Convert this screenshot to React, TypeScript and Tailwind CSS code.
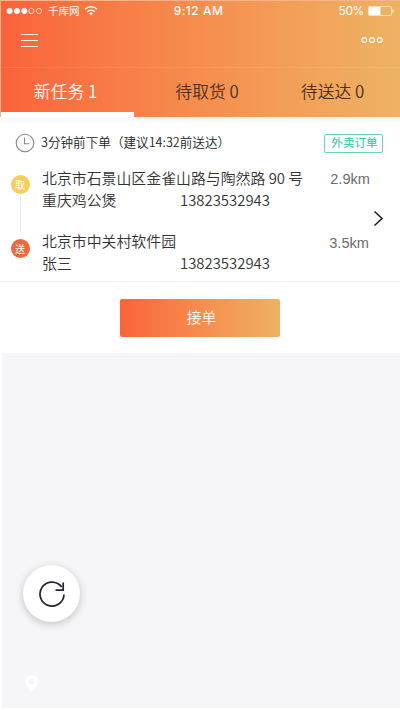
import React from 'react'

const tabs = [
  { label: '新任务 1', active: true, shift: 'pr-[4px] pt-[1px]' },
  { label: '待取货 0', active: false, shift: 'pl-[13px]' },
  { label: '待送达 0', active: false, shift: 'pr-[2px]' },
]

const stops = [
  { mark: '取', color: 'bg-[#f9cd5c]', address: '北京市石景山区金雀山路与陶然路 90 号', name: '重庆鸡公煲', phone: '13823532943', distance: '2.9km', shift: 'pt-[1px]' },
  { mark: '送', color: 'bg-[#ee6a3c]', address: '北京市中关村软件园', name: '张三', phone: '13823532943', distance: '3.5km', shift: 'pt-[2px] pr-[1px]' },
]

const StatusBar: React.FC = () => (
  <div className="grid grid-cols-3 items-center h-[19px] pl-[5px] pr-[6px] text-white">
    <div className="flex items-center">
      <svg width="38" height="8" viewBox="0 0 38 8" fill="none" stroke="#fff" strokeWidth="0.7">
        <circle cx="3.6" cy="4" r="2.7" fill="#fff" />
        <circle cx="11" cy="4" r="2.7" fill="#fff" />
        <circle cx="18.4" cy="4" r="2.7" fill="#fff" />
        <circle cx="25.4" cy="4" r="2.6" />
        <circle cx="33" cy="4" r="2.6" />
      </svg>
      <span className="ml-[4px] mt-[1px] text-[10.5px] leading-none">千库网</span>
      <svg className="ml-[4px]" width="14" height="11" viewBox="0 0 14 11" fill="none" stroke="#fff" strokeWidth="1.6">
        <path d="M1 4.2a8.6 8.6 0 0 1 12 0" />
        <path d="M3.3 6.7a5.3 5.3 0 0 1 7.4 0" />
        <path d="M7 10.5 5 8.4a3 3 0 0 1 4 0z" fill="#fff" stroke="none" />
      </svg>
    </div>
    <span className="pr-[3px] text-center font-['Inter',sans-serif] text-[12px] font-medium tracking-[0.5px] leading-none">9:12 AM</span>
    <div className="flex items-center justify-end font-['Inter',sans-serif] text-[12px] tracking-[-0.4px] leading-none">
      <span>50%</span>
      <svg className="ml-[4px]" width="26" height="10" viewBox="0 0 26 10">
        <rect x="0.5" y="0.5" width="23" height="9" rx="1" fill="none" stroke="#fff" strokeWidth="0.6" />
        <rect x="1" y="1" width="11.5" height="8" fill="#fff" />
        <path d="M24.5 3.3c1.6.4 1.6 3 0 3.4z" fill="#fff" />
      </svg>
    </div>
  </div>
)

const Header: React.FC = () => (
  <header className="h-[117px] flex flex-col bg-linear-to-r from-[#fa623a] to-[#edb362] border-t border-l border-[#f6b18e]">
    <StatusBar />
    <div className="flex items-center justify-between h-[47px] pl-[20px] pr-[17px]">
      <svg width="17" height="15" viewBox="0 0 17 15" stroke="#fff" strokeOpacity="0.9" strokeWidth="1" className="mb-[6px]">
        <path d="M0 1.5h17M0 7.5h17M0 13.5h17" />
      </svg>
      <svg width="22" height="8" viewBox="0 0 22 8" fill="none" stroke="#fff" strokeWidth="1.1" className="mb-[7px]">
        <circle cx="3.2" cy="4" r="2.4" />
        <circle cx="11" cy="4" r="2.4" />
        <circle cx="18.8" cy="4" r="2.4" />
      </svg>
    </div>
    <nav className="grid grid-cols-3 flex-1 border-t border-white/10">
      {tabs.map((tab) => (
        <button
          key={tab.label}
          className={`text-[16.8px] leading-[24px] font-[350] ${tab.shift} ${
            tab.active ? 'border-b-5 border-white text-white' : 'pb-[4px] text-[#46301f]'
          }`}
        >
          {tab.label}
        </button>
      ))}
    </nav>
  </header>
)

const OrderCard: React.FC = () => (
  <section className="relative h-[159px] bg-white border-b border-[#efefef]">
    <div className="flex items-center h-[39px] pl-[15px] pr-[17px]">
      <svg width="20" height="20" viewBox="0 0 20 20" fill="none" stroke="#888" strokeWidth="1.1">
        <circle cx="10" cy="10" r="8.8" />
        <path d="M9.5 4.5v6.2h5" />
      </svg>
      <span className="ml-[6px] text-[12.6px] leading-none font-[350] text-[#222]">3分钟前下单（建议14:32前送达）</span>
      <span className="ml-auto mt-[1px] flex items-center justify-center w-[59px] h-[19px] rounded-[2px] border border-[#63d6bd] pl-[2px] text-[11.6px] leading-none text-[#28c5a2]">
        外卖订单
      </span>
    </div>
    <div className="flex">
      <div className="flex flex-col items-center w-[40px] pt-[13px]">
        <span className={`flex items-center justify-center size-[19px] rounded-full text-[10px] leading-none text-white ${stops[0].color}`}>{stops[0].mark}</span>
        <span className="w-px h-[37px] mt-[2px] mb-[6px] bg-[#e6e6e6]" />
        <span className={`flex items-center justify-center size-[19px] rounded-full text-[10px] leading-none text-white ${stops[1].color}`}>{stops[1].mark}</span>
      </div>
      <div className="flex-1 flex flex-col gap-[19px] pt-[5px] pl-[2px]">
        {stops.map((stop) => (
          <div key={stop.mark} className="text-[14.9px] leading-[22px] font-[350] text-[#333]">
            <div className="flex justify-between h-[22px] pr-[30px]">
              <span className="whitespace-nowrap">{stop.address}</span>
              <span className={`font-['Liberation_Sans',sans-serif] text-[14.6px] text-[#6c6c6c] ${stop.shift}`}>{stop.distance}</span>
            </div>
            <div className="flex">
              <span className="w-[138px]">{stop.name}</span>
              <span>{stop.phone}</span>
            </div>
          </div>
        ))}
      </div>
    </div>
    <svg className="absolute right-[16px] top-[87px]" width="11" height="17" viewBox="0 0 11 17" fill="none" stroke="#222" strokeWidth="1.6">
      <path d="M1.5 1.5 9 8.5l-7.5 7" />
    </svg>
  </section>
)

export default function App() {
  return (
    <div className="relative flex flex-col w-[400px] h-[710px] overflow-hidden bg-white font-['Noto_Sans_CJK_SC',sans-serif]">
      <Header />
      <div className="h-[6px] bg-[#f9f9fb]" />
      <OrderCard />
      <div className="flex justify-center pt-[17px] h-[71px]">
        <button className="w-[160px] h-[38px] rounded-[2px] bg-linear-to-r from-[#fa623a] to-[#edb162] pb-[1px] pl-[3px] text-[14.8px] leading-none font-[350] text-white">
          接单
        </button>
      </div>
      <main className="flex-1 ml-[2px] mb-[2px] bg-[#f6f6f8]" />

      {/* Floating refresh button */}
      <button className="absolute left-[23px] top-[565px] flex items-center justify-center size-[57px] rounded-full bg-white shadow-[0_2px_8px_rgba(0,0,0,0.22)]">
        <svg width="26" height="26" viewBox="0 0 26 26" fill="none" stroke="#20242f" strokeWidth="1.7">
          <path d="M25 13.5a12 12 0 1 1-2.2-7.4" />
          <path d="M24.2 1.5v7.7h-7.7" />
        </svg>
      </button>
      <svg className="absolute left-[25px] top-[675px]" width="13" height="18" viewBox="0 0 13 18">
        <path fill="#fff" fillRule="evenodd" d="M6.5 0A6.3 6.3 0 0 1 12.8 6.4C12.8 10 9 14 6.5 17.5 4 14 .2 10 .2 6.4A6.3 6.3 0 0 1 6.5 0zm0 3.6a3 3 0 1 0 0 6 3 3 0 0 0 0-6z" />
      </svg>
    </div>
  )
}
